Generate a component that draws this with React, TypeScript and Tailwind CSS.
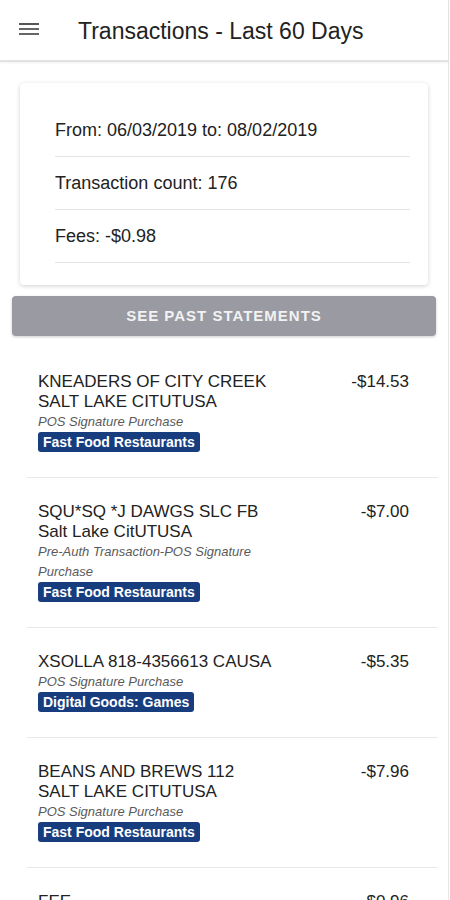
import React from "react";

type Tx = { name: string[]; sub: string[]; tag: string; amount: string };

const txs: Tx[] = [
  { name: ["KNEADERS OF CITY CREEK", "SALT LAKE CITUTUSA"], sub: ["POS Signature Purchase"], tag: "Fast Food Restaurants", amount: "-$14.53" },
  { name: ["SQU*SQ *J DAWGS SLC FB", "Salt Lake CitUTUSA"], sub: ["Pre-Auth Transaction-POS Signature", "Purchase"], tag: "Fast Food Restaurants", amount: "-$7.00" },
  { name: ["XSOLLA 818-4356613 CAUSA"], sub: ["POS Signature Purchase"], tag: "Digital Goods: Games", amount: "-$5.35" },
  { name: ["BEANS AND BREWS 112", "SALT LAKE CITUTUSA"], sub: ["POS Signature Purchase"], tag: "Fast Food Restaurants", amount: "-$7.96" },
  { name: ["FEE"], sub: ["Fee"], tag: "Fees", amount: "-$0.96" },
];

export default function App() {
  return (
    <div className="w-[450px] h-[900px] overflow-hidden bg-white text-[#222] font-['Liberation_Sans',Arial,sans-serif]">
      <div className="w-[449px] h-full border-r border-[#e6e6e6]">
        {/* Header */}
        <div className="h-[62px] flex items-center border-b-2 border-[#e2e2e2] shadow-[0_1px_2px_rgba(0,0,0,0.06)]">
          <svg width="20" height="14" viewBox="0 0 20 14" className="ml-[19px]">
            <rect x="0" y="0" width="20" height="2" fill="#555" />
            <rect x="0" y="5" width="20" height="2" fill="#666" />
            <rect x="0" y="10" width="20" height="2" fill="#666" />
          </svg>
          <div className="ml-[39px] text-[23px] leading-none text-[#222] mt-[2px]">
            Transactions - Last 60 Days
          </div>
        </div>

        {/* Summary card */}
        <div className="mt-[21px] ml-[20px] w-[408px] rounded-[4px] bg-white shadow-[0_1px_4px_rgba(0,0,0,0.18)] pl-[35px] pr-[18px] pt-[21px] pb-[22px]">
          {["From: 06/03/2019 to: 08/02/2019", "Transaction count: 176", "Fees: -$0.98"].map((t) => (
            <div key={t} className="h-[53px] flex items-center border-b border-[#e4e4e4] text-[18px] text-[#222]">
              {t}
            </div>
          ))}
        </div>

        {/* Button */}
        <div className="mt-[11px] mx-[12px] h-[40px] rounded-[4px] bg-[#999aa2] shadow-[0_1px_3px_rgba(0,0,0,0.2)] flex items-center justify-center">
          <span className="text-[15px] font-bold tracking-[1px] text-[#f2f2f2]">SEE PAST STATEMENTS</span>
        </div>

        {/* List */}
        <div className="mt-[12px] ml-[27px] w-[411px]">
          {txs.map((tx, i) => (
            <div key={i} className="flex border-b border-[#e8e8e8] pl-[11px] pr-[29px] pt-[24px] pb-[25px]">
              <div className="w-[243px] flex flex-col items-start">
                {tx.name.map((n) => (
                  <div key={n} className="text-[17px] leading-[20px] text-[#222]">{n}</div>
                ))}
                {tx.sub.map((s) => (
                  <div key={s} className="text-[13px] leading-[20px] italic text-[#5a5a5a]">{s}</div>
                ))}
                <div className="h-[20px] px-[5px] rounded-[3px] bg-[#173d7f] text-white text-[14px] font-bold leading-[20px]">
                  {tx.tag}
                </div>
              </div>
              <div className="flex-1 text-right text-[17px] leading-[20px] text-[#222]">{tx.amount}</div>
            </div>
          ))}
        </div>
      </div>
    </div>
  );
}
